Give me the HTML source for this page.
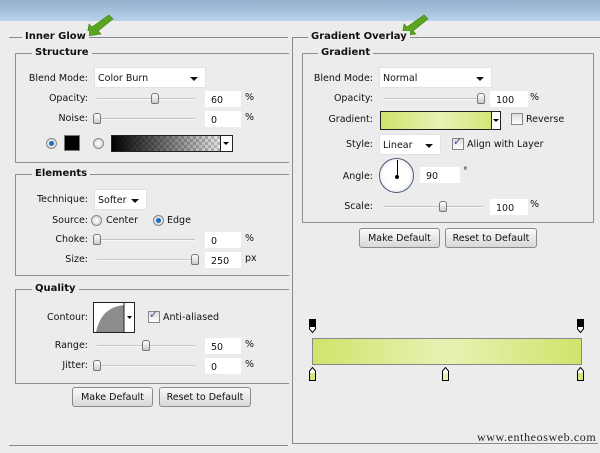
<!DOCTYPE html>
<html><head><meta charset="utf-8"><style>
*{margin:0;padding:0;box-sizing:border-box}
body{width:600px;height:453px;background:#ececec;position:relative;overflow:hidden;font-family:"DejaVu Sans","Liberation Sans",sans-serif;font-size:9.5px;color:#111}
div,span{position:absolute}
.top{left:0;top:0;width:600px;height:21px;background:linear-gradient(#95afce,#b8d2ea)}
.hl{height:1px;background:#8a8a8a}
.vl{width:1px;background:#8a8a8a}
.box{border:1px solid #8f8f8f}
.t{font-weight:bold;background:#ececec;padding:0 3px;font-size:10px;white-space:nowrap}
.lab{text-align:right;white-space:nowrap}
.sel{background:#fff;border:1px solid #e2e2e2;padding:5px 0 0 3px;white-space:nowrap}
.sel:after{content:"";position:absolute;right:7px;top:9px;border:4px solid transparent;border-top:4px solid #111;border-bottom:0}
.sl{height:2px;background:#c4c4c4;border-bottom:1px solid #f8f8f8}
.th{width:8px;height:11px;border:1px solid #777;border-radius:3px 3px 2px 2px;background:linear-gradient(#fff,#ccc)}
.in{background:#fff;height:16px;padding:4px 0 0 6px}
.rad{width:11px;height:11px;border-radius:50%;border:1px solid #888;background:radial-gradient(#fff,#ccc)}
.rad.on:after{content:"";position:absolute;left:2px;top:2px;width:5px;height:5px;border-radius:50%;background:#1b6fc0}
.cb{width:12px;height:12px;border:1px solid #888;background:linear-gradient(#ddd,#fff)}
.btn{height:20px;border:1px solid #8a8a8a;border-radius:3px;background:linear-gradient(#fafafa,#d8d8d8);text-align:center;padding-top:4px;white-space:nowrap}
</style></head><body>
<div class="top"></div>
<svg style="position:absolute;left:80px;top:12px" width="35" height="28"><path d="M29 3 L33 7 L18 19 L21 22 L7 24 L9 12 L12 15 Z" fill="#5aa51f" stroke="#3f7d12" stroke-width=".6"/></svg>
<svg style="position:absolute;left:395px;top:12px" width="35" height="28"><path d="M29 3 L33 7 L18 19 L21 22 L7 24 L9 12 L12 15 Z" fill="#5aa51f" stroke="#3f7d12" stroke-width=".6"/></svg>

<div class="hl" style="left:9px;top:37px;width:279px"></div>
<div class="t" style="left:22px;top:31px">Inner Glow</div>
<div class="hl" style="left:9px;top:445px;width:279px"></div>

<div class="box" style="left:15px;top:53px;width:274px;height:110px;border-right:0"></div>
<div class="t" style="left:32px;top:47px">Structure</div>
<div class="lab" style="left:20px;width:68px;top:73px">Blend Mode:</div>
<div class="sel" style="left:94px;top:67px;width:112px;height:21px">Color Burn</div>
<div class="lab" style="left:20px;width:68px;top:93px">Opacity:</div>
<div class="sl" style="left:97px;top:98px;width:98px"></div><div class="th" style="left:151px;top:93px"></div>
<div class="in" style="left:205px;top:91px;width:36px">60</div><span style="left:245px;top:92px">%</span>
<div class="lab" style="left:20px;width:68px;top:113px">Noise:</div>
<div class="sl" style="left:97px;top:118px;width:98px"></div><div class="th" style="left:93px;top:113px"></div>
<div class="in" style="left:205px;top:111px;width:36px">0</div><span style="left:245px;top:112px">%</span>
<div class="rad on" style="left:46px;top:138px"></div>
<div style="left:64px;top:135px;width:16px;height:16px;background:#000;border:1px solid #777"></div>
<div class="rad" style="left:93px;top:138px"></div>
<div style="left:111px;top:135px;width:122px;height:17px;border:1px solid #222;background:linear-gradient(90deg,#000,rgba(0,0,0,0)),repeating-conic-gradient(#ccc 0 25%,#fff 0 50%) 0 0/6px 6px"></div>
<div style="left:220px;top:135px;width:13px;height:17px;border:1px solid #222;background:#fff"></div>
<div style="left:223px;top:142px;border:3px solid transparent;border-top:3px solid #000"></div>

<div class="box" style="left:15px;top:174px;width:274px;height:102px;border-right:0"></div>
<div class="t" style="left:32px;top:168px">Elements</div>
<div class="lab" style="left:20px;width:68px;top:194px">Technique:</div>
<div class="sel" style="left:94px;top:189px;width:53px;height:21px">Softer</div>
<div class="lab" style="left:20px;width:68px;top:215px">Source:</div>
<div class="rad" style="left:91px;top:215px"></div><span style="left:106px;top:215px">Center</span>
<div class="rad on" style="left:153px;top:215px"></div><span style="left:167px;top:215px">Edge</span>
<div class="lab" style="left:20px;width:68px;top:234px">Choke:</div>
<div class="sl" style="left:97px;top:239px;width:98px"></div><div class="th" style="left:93px;top:234px"></div>
<div class="in" style="left:205px;top:232px;width:36px">0</div><span style="left:245px;top:233px">%</span>
<div class="lab" style="left:20px;width:68px;top:254px">Size:</div>
<div class="sl" style="left:97px;top:259px;width:98px"></div><div class="th" style="left:191px;top:254px"></div>
<div class="in" style="left:205px;top:252px;width:36px">250</div><span style="left:245px;top:253px">px</span>

<div class="box" style="left:15px;top:289px;width:274px;height:95px;border-right:0"></div>
<div class="t" style="left:32px;top:283px">Quality</div>
<div class="lab" style="left:20px;width:68px;top:312px">Contour:</div>
<div style="left:93px;top:302px;width:42px;height:31px;border:1px solid #222;background:#fff;overflow:hidden">
<svg width="40" height="29" style="position:absolute;left:0;top:0"><path d="M2 29 C6 12 14 4 30 2 L30 29 Z" fill="#8c8c8c"/><line x1="30" y1="0" x2="30" y2="29" stroke="#222"/><path d="M33 13 L38 13 L35.5 16Z" fill="#000"/></svg></div>
<div class="cb" style="left:148px;top:311px"></div><span style="left:149px;top:308px;color:#3a4fa0;font-size:11px">✓</span>
<span style="left:163px;top:312px">Anti-aliased</span>
<div class="lab" style="left:20px;width:68px;top:340px">Range:</div>
<div class="sl" style="left:97px;top:345px;width:98px"></div><div class="th" style="left:142px;top:340px"></div>
<div class="in" style="left:205px;top:338px;width:36px">50</div><span style="left:245px;top:339px">%</span>
<div class="lab" style="left:20px;width:68px;top:360px">Jitter:</div>
<div class="sl" style="left:97px;top:365px;width:98px"></div><div class="th" style="left:93px;top:360px"></div>
<div class="in" style="left:205px;top:358px;width:36px">0</div><span style="left:245px;top:359px">%</span>
<div class="btn" style="left:72px;top:387px;width:81px">Make Default</div>
<div class="btn" style="left:159px;top:387px;width:92px">Reset to Default</div>

<div class="vl" style="left:292px;top:37px;height:407px"></div>
<div class="hl" style="left:292px;top:37px;width:308px"></div>
<div class="hl" style="left:292px;top:443px;width:306px"></div>
<div class="t" style="left:308px;top:31px">Gradient Overlay</div>
<div class="box" style="left:302px;top:53px;width:292px;height:170px"></div>
<div class="t" style="left:318px;top:47px">Gradient</div>
<div class="lab" style="left:300px;width:73px;top:73px">Blend Mode:</div>
<div class="sel" style="left:379px;top:67px;width:113px;height:21px">Normal</div>
<div class="lab" style="left:300px;width:73px;top:93px">Opacity:</div>
<div class="sl" style="left:383px;top:98px;width:100px"></div><div class="th" style="left:477px;top:93px"></div>
<div class="in" style="left:490px;top:91px;width:38px">100</div><span style="left:530px;top:92px">%</span>
<div class="lab" style="left:300px;width:73px;top:114px">Gradient:</div>
<div style="left:380px;top:111px;width:121px;height:19px;border:1px solid #222;background:linear-gradient(90deg,#cfe46b,#e6f2b4 50%,#cfe46b)"></div>
<div style="left:491px;top:111px;width:10px;height:19px;border:1px solid #222;background:#fff"></div>
<div style="left:493px;top:119px;border:3px solid transparent;border-top:3px solid #000"></div>
<div class="cb" style="left:511px;top:113px"></div><span style="left:526px;top:114px">Reverse</span>
<div class="lab" style="left:300px;width:73px;top:139px">Style:</div>
<div class="sel" style="left:379px;top:134px;width:62px;height:21px">Linear</div>
<div class="cb" style="left:452px;top:138px"></div><span style="left:453px;top:135px;color:#3a4fa0;font-size:11px">✓</span>
<span style="left:467px;top:139px">Align with Layer</span>
<div class="lab" style="left:300px;width:73px;top:171px">Angle:</div>
<div style="left:379px;top:158px;width:35px;height:35px;border-radius:50%;border:1px solid #4a5a7a;background:radial-gradient(#fff 50%,#e4e4e4)"></div>
<div style="left:397px;top:160px;width:1px;height:16px;background:#000"></div>
<div style="left:395px;top:175px;width:4px;height:4px;background:#000;border-radius:50%"></div>
<div class="in" style="left:420px;top:167px;width:40px">90</div><span style="left:463px;top:166px">°</span>
<div class="lab" style="left:300px;width:73px;top:201px">Scale:</div>
<div class="sl" style="left:383px;top:206px;width:100px"></div><div class="th" style="left:439px;top:201px"></div>
<div class="in" style="left:490px;top:199px;width:38px">100</div><span style="left:530px;top:199px">%</span>
<div class="btn" style="left:359px;top:228px;width:81px">Make Default</div>
<div class="btn" style="left:445px;top:228px;width:92px">Reset to Default</div>

<svg style="position:absolute;left:308px;top:319px" width="10" height="15"><path d="M1.5 .5 H7.5 V10 L4.5 13.5 L1.5 10Z" fill="#fff" stroke="#000"/><rect x="2" y="1" width="5" height="7" fill="#000"/></svg>
<svg style="position:absolute;left:576px;top:319px" width="10" height="15"><path d="M1.5 .5 H7.5 V10 L4.5 13.5 L1.5 10Z" fill="#fff" stroke="#000"/><rect x="2" y="1" width="5" height="7" fill="#000"/></svg>
<div style="left:312px;top:338px;width:270px;height:27px;border:1px solid #888;background:linear-gradient(90deg,#cfe46b,#e6f2b4 50%,#cfe46b)"></div>
<svg style="position:absolute;left:308px;top:367px" width="10" height="15"><path d="M1.5 13.5 H7.5 V4 L4.5 .5 L1.5 4Z" fill="#fff" stroke="#000"/><rect x="2" y="6" width="5" height="7" fill="#d3e67a"/></svg>
<svg style="position:absolute;left:441px;top:367px" width="10" height="15"><path d="M1.5 13.5 H7.5 V4 L4.5 .5 L1.5 4Z" fill="#fff" stroke="#000"/><rect x="2" y="6" width="5" height="7" fill="#e6f2b4"/></svg>
<svg style="position:absolute;left:576px;top:367px" width="10" height="15"><path d="M1.5 13.5 H7.5 V4 L4.5 .5 L1.5 4Z" fill="#fff" stroke="#000"/><rect x="2" y="6" width="5" height="7" fill="#d3e67a"/></svg>
<span style="left:477px;top:430px;font-family:'Liberation Serif',serif;font-size:12px;letter-spacing:.6px;color:#222">www.entheosweb.com</span>
</body></html>
